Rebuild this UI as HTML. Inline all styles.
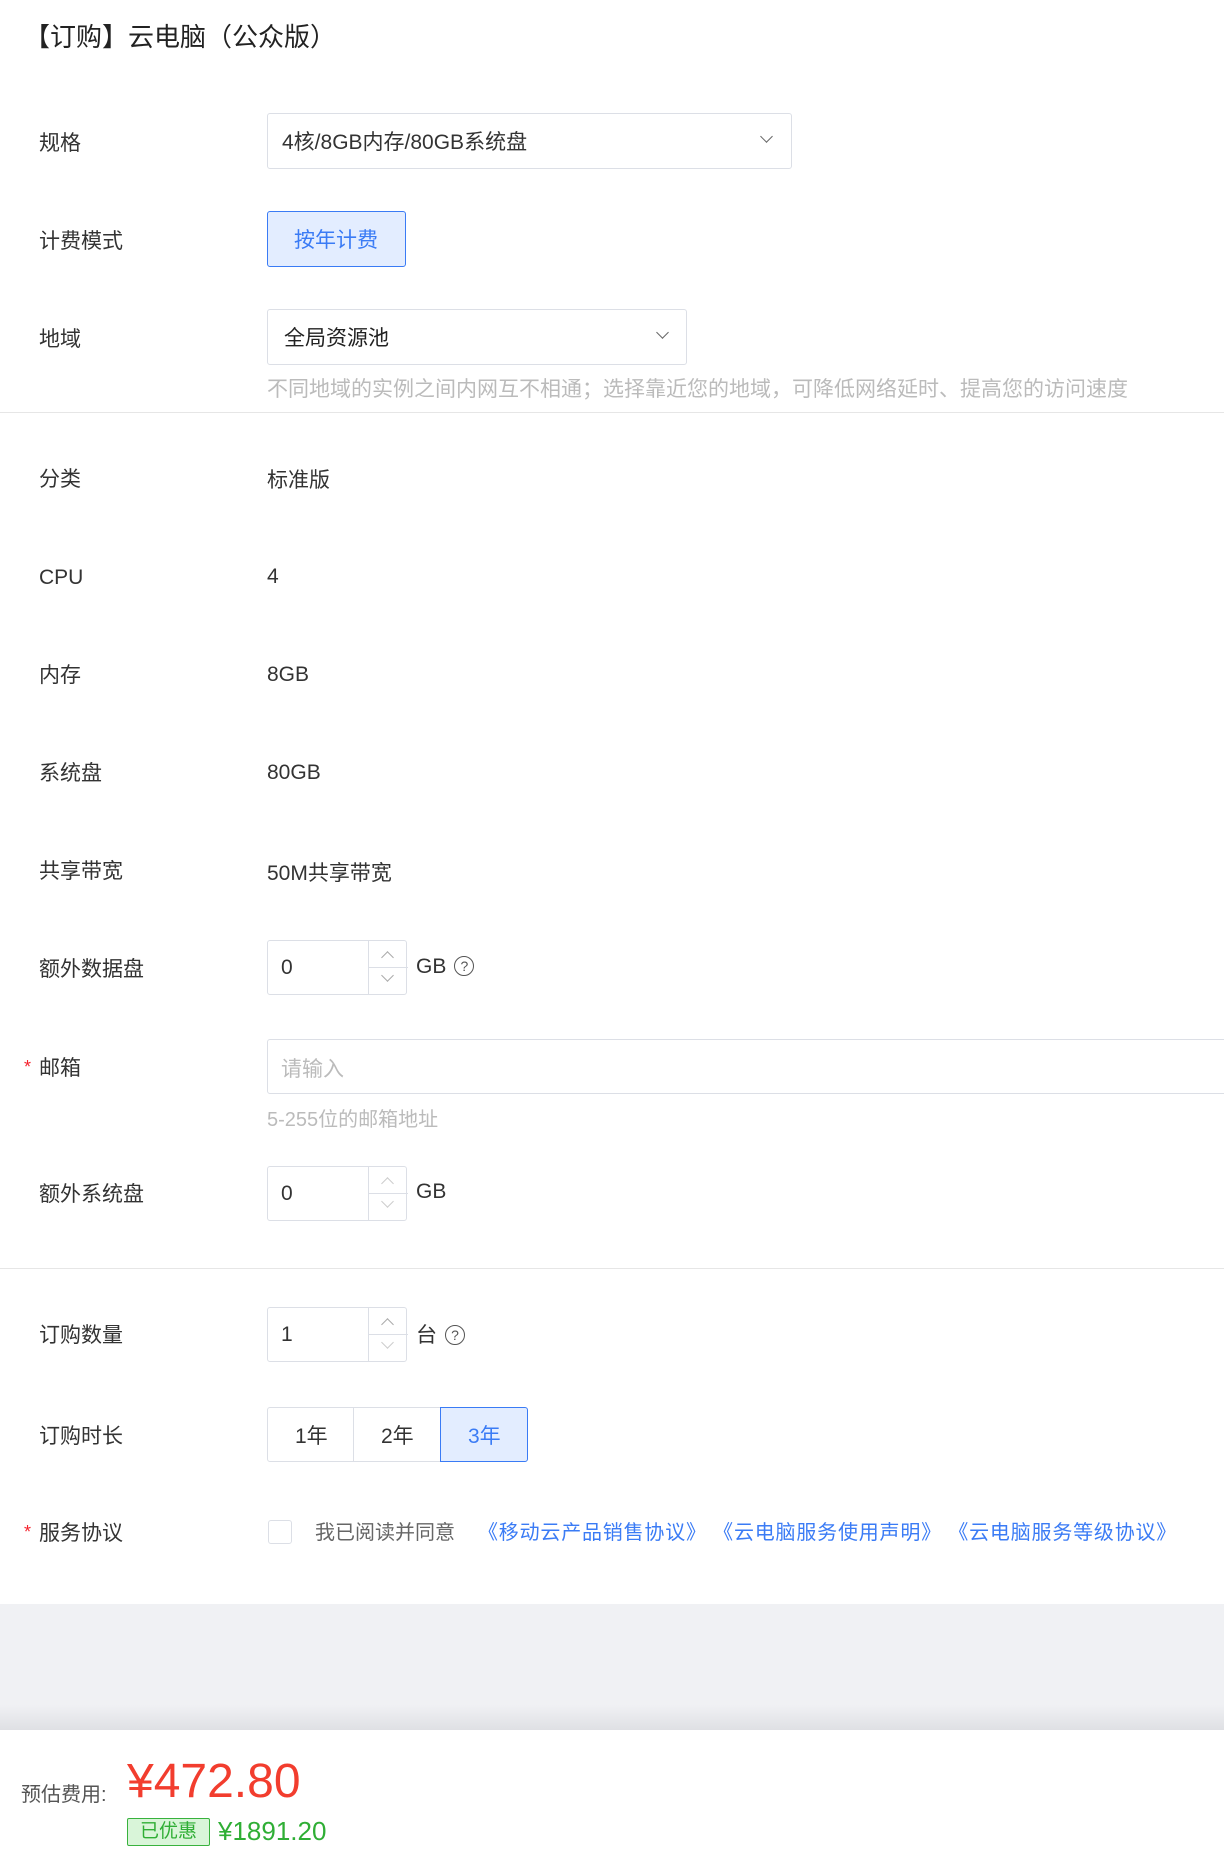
<!DOCTYPE html>
<html><head><meta charset="utf-8"><style>
*{margin:0;padding:0;box-sizing:border-box}
body{width:1224px;height:1859px;position:relative;background:#fff;font-family:"Liberation Sans","Noto Sans CJK SC",sans-serif;color:#333;font-size:21px;overflow:hidden}
.a{position:absolute;white-space:nowrap}
.lbl{position:absolute;left:39px;line-height:30px;transform:translateY(-13px);white-space:nowrap}
.req::before{content:"*";color:#f5222d;position:absolute;left:-15px;top:-2px;font-size:18px}
.box{position:absolute;border:1px solid #dcdfe6;border-radius:3px;background:#fff}
.chev{position:absolute;width:9px;height:9px;border-right:1.6px solid #666;border-bottom:1.6px solid #666;transform:rotate(45deg)}
.num{position:absolute;border:1px solid #dcdfe6;border-radius:3px;width:140px;height:55px}
.num span{position:absolute;left:13px;top:15px}
.num .sp{position:absolute;left:100px;top:0;width:39px;height:53px;border-left:1px solid #dcdfe6}
.num .sp i{position:absolute;left:14px;width:9px;height:9px;border-left:1.4px solid #aaa;border-top:1.4px solid #aaa}
.num .sp .u{top:12px;transform:rotate(45deg)}
.num .sp .d{top:30px;transform:rotate(225deg)}
.num .sp hr{position:absolute;top:26px;left:0;width:39px;border:0;border-top:1px solid #dcdfe6}
.q{display:inline-block;width:20px;height:20px;border:1.3px solid #555;border-radius:50%;font-size:14px;text-align:center;line-height:18px;color:#555;vertical-align:2px;margin-left:8px}
.line{position:absolute;left:0;width:1224px;border-top:1px solid #e6e6e6}
</style></head><body>
<div class="a" style="left:24px;top:17px;font-size:26px;color:#222">【订购】云电脑（公众版）</div>

<div class="lbl" style="top:142px">规格</div>
<div class="box" style="left:267px;top:113px;width:525px;height:56px"><div class="a" style="left:14px;top:12px;color:#333">4核/8GB内存/80GB系统盘</div><div class="chev" style="left:494px;top:18px"></div></div>

<div class="lbl" style="top:240px">计费模式</div>
<div class="box" style="left:267px;top:211px;width:139px;height:56px;border-color:#3a7bf5;background:#e3edff"><div class="a" style="left:26px;top:12px;color:#3a7bf5">按年计费</div></div>

<div class="lbl" style="top:338px">地域</div>
<div class="box" style="left:267px;top:309px;width:420px;height:56px"><div class="a" style="left:16px;top:12px;color:#222">全局资源池</div><div class="chev" style="left:390px;top:18px"></div></div>
<div class="a" style="left:267px;top:373px;color:#bbb;font-size:21px">不同地域的实例之间内网互不相通；选择靠近您的地域，可降低网络延时、提高您的访问速度</div>
<div class="line" style="top:412px"></div>

<div class="lbl" style="top:478px">分类</div><div class="a" style="left:267px;top:464px">标准版</div>
<div class="lbl" style="top:576px">CPU</div><div class="a" style="left:267px;top:565px">4</div>
<div class="lbl" style="top:674px">内存</div><div class="a" style="left:267px;top:663px">8GB</div>
<div class="lbl" style="top:772px">系统盘</div><div class="a" style="left:267px;top:761px">80GB</div>
<div class="lbl" style="top:870px">共享带宽</div><div class="a" style="left:267px;top:857px">50M共享带宽</div>

<div class="lbl" style="top:968px">额外数据盘</div>
<div class="num" style="left:267px;top:940px"><span>0</span><div class="sp"><i class="u"></i><hr><i class="d"></i></div></div>
<div class="a" style="left:416px;top:955px">GB<span class="q">?</span></div>

<div class="lbl req" style="top:1067px">邮箱</div>
<div class="box" style="left:267px;top:1039px;width:980px;height:55px"><div class="a" style="left:13px;top:13px;color:#bbb">请输入</div></div>
<div class="a" style="left:267px;top:1103px;color:#bbb;font-size:20px">5-255位的邮箱地址</div>

<div class="lbl" style="top:1193px">额外系统盘</div>
<div class="num" style="left:267px;top:1166px"><span>0</span><div class="sp"><i class="u" style="border-color:#ccc"></i><hr><i class="d" style="border-color:#ccc"></i></div></div>
<div class="a" style="left:416px;top:1180px">GB</div>
<div class="line" style="top:1268px"></div>

<div class="lbl" style="top:1334px">订购数量</div>
<div class="num" style="left:267px;top:1307px"><span>1</span><div class="sp"><i class="u"></i><hr><i class="d" style="border-color:#ccc"></i></div></div>
<div class="a" style="left:416px;top:1319px">台<span class="q">?</span></div>

<div class="lbl" style="top:1435px">订购时长</div>
<div class="box" style="left:267px;top:1407px;width:87px;height:55px;border-radius:3px 0 0 3px"><div class="a" style="left:27px;top:12px">1年</div></div>
<div class="box" style="left:353px;top:1407px;width:88px;height:55px;border-radius:0"><div class="a" style="left:27px;top:12px">2年</div></div>
<div class="box" style="left:440px;top:1407px;width:88px;height:55px;border-radius:0 3px 3px 0;border-color:#3a7bf5;background:#e3edff"><div class="a" style="left:27px;top:12px;color:#3a7bf5">3年</div></div>

<div class="lbl req" style="top:1532px">服务协议</div>
<div class="box" style="left:268px;top:1520px;width:24px;height:24px;border-radius:3px"></div>
<div class="a" style="left:315px;top:1516px;color:#666;font-size:20px">我已阅读并同意</div>
<div class="a" style="left:478px;top:1516px;color:#3a7bf5;font-size:20px;letter-spacing:0.8px">《移动云产品销售协议》 《云电脑服务使用声明》 《云电脑服务等级协议》</div>

<div class="a" style="left:0;top:1604px;width:1224px;height:126px;background:linear-gradient(#f0f1f4 0,#f0f1f4 80%,#dfe0e4 100%)"></div>

<div class="a" style="left:21px;top:1778px;font-size:20px;color:#555">预估费用:</div>
<div class="a" style="left:127px;top:1754px;font-size:48px;color:#f23d2e">¥472.80</div>
<div class="a" style="left:127px;top:1818px;width:83px;height:28px;background:#d9f5d9;border:1px solid #38b23d;border-radius:2px;color:#2fae35;font-size:19px;text-align:center;line-height:26px">已优惠</div>
<div class="a" style="left:218px;top:1816px;font-size:26px;color:#2fae35">¥1891.20</div>
</body></html>
